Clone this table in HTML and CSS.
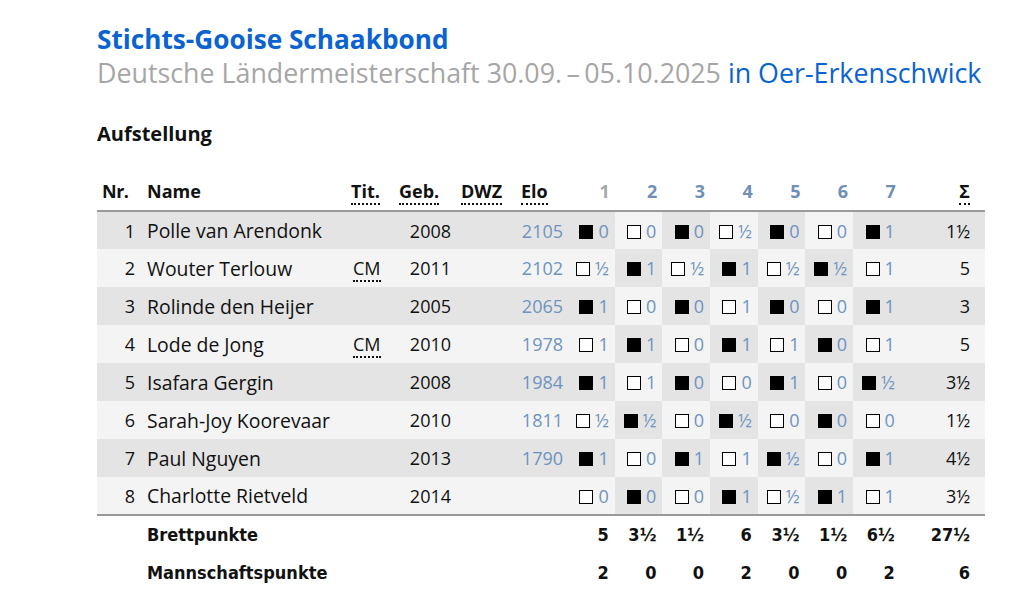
FILE: index.html
```html
<!DOCTYPE html>
<html lang="de">
<head>
<meta charset="utf-8">
<title>Aufstellung</title>
<link rel="stylesheet" href="styles.css">
</head>
<body>
<main class="page">
  <header class="head">
    <h1 class="title">Stichts-Gooise Schaakbond</h1>
    <p class="subtitle">Deutsche Ländermeisterschaft 30.09.&thinsp;–&thinsp;05.10.2025 <span class="place">in Oer-Erkenschwick</span></p>
  </header>
  <h2 class="section">Aufstellung</h2>
  <table class="lineup">
    <colgroup>
      <col class="c-nr"><col class="c-name"><col class="c-tit"><col class="c-geb"><col class="c-dwz"><col class="c-elo">
      <col class="c-rd"><col class="c-rd"><col class="c-rd"><col class="c-rd"><col class="c-rd"><col class="c-rd"><col class="c-rd">
      <col class="c-sum">
    </colgroup>
    <thead>
      <tr>
        <th class="nr">Nr.</th>
        <th class="name">Name</th>
        <th class="tit"><abbr title="Titel">Tit.</abbr></th>
        <th class="geb"><abbr title="Geburtsjahr">Geb.</abbr></th>
        <th class="dwz"><abbr title="Deutsche Wertungszahl">DWZ</abbr></th>
        <th class="elo"><abbr title="Elo-Zahl">Elo</abbr></th>
        <th class="rd first">1</th><th class="rd">2</th><th class="rd">3</th><th class="rd">4</th><th class="rd">5</th><th class="rd">6</th><th class="rd">7</th>
        <th class="sum"><abbr title="Summe">Σ</abbr></th>
      </tr>
    </thead>
    <tbody>
      <tr><td class="nr">1</td><td class="name">Polle van Arendonk</td><td class="tit"></td><td class="geb">2008</td><td class="dwz"></td><td class="elo">2105</td>
        <td class="rd"><span class="sq b"></span><span class="res">0</span></td><td class="rd alt"><span class="sq w"></span><span class="res">0</span></td><td class="rd"><span class="sq b"></span><span class="res">0</span></td><td class="rd alt"><span class="sq w"></span><span class="res">½</span></td><td class="rd"><span class="sq b"></span><span class="res">0</span></td><td class="rd alt"><span class="sq w"></span><span class="res">0</span></td><td class="rd"><span class="sq b"></span><span class="res">1</span></td>
        <td class="sum">1½</td></tr>
      <tr><td class="nr">2</td><td class="name">Wouter Terlouw</td><td class="tit"><abbr title="Candidate Master">CM</abbr></td><td class="geb">2011</td><td class="dwz"></td><td class="elo">2102</td>
        <td class="rd"><span class="sq w"></span><span class="res">½</span></td><td class="rd alt"><span class="sq b"></span><span class="res">1</span></td><td class="rd"><span class="sq w"></span><span class="res">½</span></td><td class="rd alt"><span class="sq b"></span><span class="res">1</span></td><td class="rd"><span class="sq w"></span><span class="res">½</span></td><td class="rd alt"><span class="sq b"></span><span class="res">½</span></td><td class="rd"><span class="sq w"></span><span class="res">1</span></td>
        <td class="sum">5</td></tr>
      <tr><td class="nr">3</td><td class="name">Rolinde den Heijer</td><td class="tit"></td><td class="geb">2005</td><td class="dwz"></td><td class="elo">2065</td>
        <td class="rd"><span class="sq b"></span><span class="res">1</span></td><td class="rd alt"><span class="sq w"></span><span class="res">0</span></td><td class="rd"><span class="sq b"></span><span class="res">0</span></td><td class="rd alt"><span class="sq w"></span><span class="res">1</span></td><td class="rd"><span class="sq b"></span><span class="res">0</span></td><td class="rd alt"><span class="sq w"></span><span class="res">0</span></td><td class="rd"><span class="sq b"></span><span class="res">1</span></td>
        <td class="sum">3</td></tr>
      <tr><td class="nr">4</td><td class="name">Lode de Jong</td><td class="tit"><abbr title="Candidate Master">CM</abbr></td><td class="geb">2010</td><td class="dwz"></td><td class="elo">1978</td>
        <td class="rd"><span class="sq w"></span><span class="res">1</span></td><td class="rd alt"><span class="sq b"></span><span class="res">1</span></td><td class="rd"><span class="sq w"></span><span class="res">0</span></td><td class="rd alt"><span class="sq b"></span><span class="res">1</span></td><td class="rd"><span class="sq w"></span><span class="res">1</span></td><td class="rd alt"><span class="sq b"></span><span class="res">0</span></td><td class="rd"><span class="sq w"></span><span class="res">1</span></td>
        <td class="sum">5</td></tr>
      <tr><td class="nr">5</td><td class="name">Isafara Gergin</td><td class="tit"></td><td class="geb">2008</td><td class="dwz"></td><td class="elo">1984</td>
        <td class="rd"><span class="sq b"></span><span class="res">1</span></td><td class="rd alt"><span class="sq w"></span><span class="res">1</span></td><td class="rd"><span class="sq b"></span><span class="res">0</span></td><td class="rd alt"><span class="sq w"></span><span class="res">0</span></td><td class="rd"><span class="sq b"></span><span class="res">1</span></td><td class="rd alt"><span class="sq w"></span><span class="res">0</span></td><td class="rd"><span class="sq b"></span><span class="res">½</span></td>
        <td class="sum">3½</td></tr>
      <tr><td class="nr">6</td><td class="name">Sarah-Joy Koorevaar</td><td class="tit"></td><td class="geb">2010</td><td class="dwz"></td><td class="elo">1811</td>
        <td class="rd"><span class="sq w"></span><span class="res">½</span></td><td class="rd alt"><span class="sq b"></span><span class="res">½</span></td><td class="rd"><span class="sq w"></span><span class="res">0</span></td><td class="rd alt"><span class="sq b"></span><span class="res">½</span></td><td class="rd"><span class="sq w"></span><span class="res">0</span></td><td class="rd alt"><span class="sq b"></span><span class="res">0</span></td><td class="rd"><span class="sq w"></span><span class="res">0</span></td>
        <td class="sum">1½</td></tr>
      <tr><td class="nr">7</td><td class="name">Paul Nguyen</td><td class="tit"></td><td class="geb">2013</td><td class="dwz"></td><td class="elo">1790</td>
        <td class="rd"><span class="sq b"></span><span class="res">1</span></td><td class="rd alt"><span class="sq w"></span><span class="res">0</span></td><td class="rd"><span class="sq b"></span><span class="res">1</span></td><td class="rd alt"><span class="sq w"></span><span class="res">1</span></td><td class="rd"><span class="sq b"></span><span class="res">½</span></td><td class="rd alt"><span class="sq w"></span><span class="res">0</span></td><td class="rd"><span class="sq b"></span><span class="res">1</span></td>
        <td class="sum">4½</td></tr>
      <tr><td class="nr">8</td><td class="name">Charlotte Rietveld</td><td class="tit"></td><td class="geb">2014</td><td class="dwz"></td><td class="elo"></td>
        <td class="rd"><span class="sq w"></span><span class="res">0</span></td><td class="rd alt"><span class="sq b"></span><span class="res">0</span></td><td class="rd"><span class="sq w"></span><span class="res">0</span></td><td class="rd alt"><span class="sq b"></span><span class="res">1</span></td><td class="rd"><span class="sq w"></span><span class="res">½</span></td><td class="rd alt"><span class="sq b"></span><span class="res">1</span></td><td class="rd"><span class="sq w"></span><span class="res">1</span></td>
        <td class="sum">3½</td></tr>
    </tbody>
    <tfoot>
      <tr><td></td><td class="label" colspan="5">Brettpunkte</td>
        <td class="rd">5</td><td class="rd">3½</td><td class="rd">1½</td><td class="rd">6</td><td class="rd">3½</td><td class="rd">1½</td><td class="rd">6½</td><td class="sum">27½</td></tr>
      <tr><td></td><td class="label" colspan="5">Mannschaftspunkte</td>
        <td class="rd">2</td><td class="rd">0</td><td class="rd">0</td><td class="rd">2</td><td class="rd">0</td><td class="rd">0</td><td class="rd">2</td><td class="sum">6</td></tr>
    </tfoot>
  </table>
</main>
</body>
</html>
```

FILE: styles.css
```css
* { box-sizing: border-box; }

body {
  margin: 0;
  background: #ffffff;
  color: #111111;
  font-family: "Open Sans", "Noto Sans", sans-serif;
}

.page {
  padding: 22px 0 0 97px;
}

.head { margin: 0; }

.title {
  margin: 0;
  font-size: 26.2px;
  line-height: 34px;
  font-weight: 700;
  color: #0a63d0;
}

.subtitle {
  margin: 0;
  font-size: 26.8px;
  line-height: 34px;
  font-weight: 400;
  color: #a6a6a6;
}

.place { color: #0a63d0; }

.section {
  margin: 31px 0 0;
  font-size: 20px;
  line-height: 26px;
  font-weight: 700;
  color: #111111;
}

.lineup {
  margin-top: 24px;
  width: 888px;
  border-collapse: collapse;
  table-layout: fixed;
  font-size: 18px;
}

.c-nr { width: 44px; }
.c-name { width: 204px; }
.c-tit { width: 48px; }
.c-geb { width: 62px; }
.c-dwz { width: 60px; }
.c-elo { width: 52px; }
.c-rd { width: 47.7px; }
.c-sum { width: 84px; }

.lineup th {
  height: 40px;
  font-weight: 700;
  font-size: 18px;
  text-align: left;
  padding: 0 0 0 6px;
  vertical-align: middle;
  border-bottom: 2px solid #9a9a9a;
}

.lineup th.nr { padding-left: 5px; letter-spacing: -0.5px; }

.lineup abbr {
  text-decoration: none;
  border-bottom: 2px dotted #111;
  padding-bottom: 0;
}

.lineup th.rd {
  text-align: right;
  padding: 0 5px 0 0;
  color: #6f8fb8;
}
.lineup th.rd.first { color: #a8a8a8; }
.lineup th.sum { text-align: right; padding: 0 15px 0 0; }

.lineup td {
  height: 38px;
  padding: 0;
  vertical-align: middle;
  white-space: nowrap;
}

.lineup tbody tr:nth-child(odd) td { background: #e4e4e4; }
.lineup tbody tr:nth-child(even) td { background: #f4f4f4; }
.lineup tbody tr:nth-child(odd) td.alt { background: #f4f4f4; }
.lineup tbody tr:nth-child(even) td.alt { background: #e4e4e4; }

.lineup tbody tr:last-child td { border-bottom: 2px solid #9a9a9a; }

td.nr { text-align: right; padding-right: 6px; }
td.name { padding-left: 6px; font-size: 19.4px; }
td.tit { padding-left: 8px; }
td.geb { text-align: right; padding-right: 4px; }
td.elo { text-align: right; padding-right: 4px; color: #6f93c0; }
td.rd { text-align: right; padding-right: 6px; }
td.sum { text-align: right; padding-right: 15px; }

.sq {
  display: inline-block;
  width: 14px;
  height: 14px;
  vertical-align: -1px;
  margin-right: 5px;
}
.sq.b { background: #000; }
.sq.w { background: #fff; border: 1px solid #000; }

.res { color: #6f93c0; }

.lineup tfoot td {
  font-family: "DejaVu Sans Condensed", "Open Sans", sans-serif;
  font-weight: 700;
  font-size: 18px;
  background: #fff;
}
.lineup tfoot td.label { padding-left: 6px; }
```
